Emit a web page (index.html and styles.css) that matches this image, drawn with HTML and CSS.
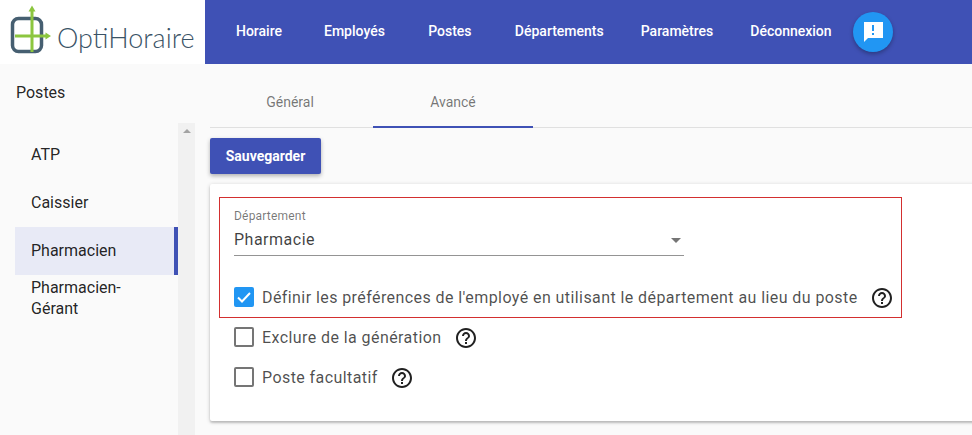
FILE: index.html
```html
<!DOCTYPE html>
<html lang="fr">
<head>
<meta charset="utf-8">
<title>OptiHoraire</title>
<link rel="stylesheet" href="styles.css">
</head>
<body>
<header class="topbar">
  <div class="brand">
    <svg class="brand-mark" width="56" height="64" viewBox="0 0 56 64" aria-hidden="true">
      <rect x="12.500" y="18.500" width="29" height="33" rx="6" fill="none" stroke="#465f71" stroke-width="3.500"/>
      <path d="M32 52V9M15 36h33" fill="none" stroke="#8cc63f" stroke-width="3"/>
      <path d="M32 5.500l-3.500 6h7zM51 36l-5.500-3.500v7z" fill="#8cc63f"/>
    </svg>
    <span class="brand-name">OptiHoraire</span>
  </div>
  <nav class="nav">
    <a class="nav-item">Horaire</a>
    <a class="nav-item">Employés</a>
    <a class="nav-item">Postes</a>
    <a class="nav-item">Départements</a>
    <a class="nav-item">Paramètres</a>
    <a class="nav-item">Déconnexion</a>
    <button class="fab" aria-label="Commentaires">
      <svg width="24" height="24" viewBox="0 0 24 24"><path fill="#fff" d="M22 2H3v20l4-4h15V2zm-9 9h-2V5h2v6zm0 4h-2v-2h2v2z"/></svg>
    </button>
  </nav>
</header>
<div class="layout">
  <aside class="sidebar">
    <h2 class="side-title">Postes</h2>
    <div class="side-scroll">
      <ul class="side-list">
        <li class="side-item">ATP</li>
        <li class="side-item">Caissier</li>
        <li class="side-item is-active">Pharmacien</li>
        <li class="side-item">Pharmacien-Gérant</li>
      </ul>
      <div class="scrollbar"><span class="scroll-arrow"></span></div>
    </div>
  </aside>
  <main class="main">
    <div class="tabs">
      <div class="tab">Général</div>
      <div class="tab is-current">Avancé</div>
    </div>
    <button class="save">Sauvegarder</button>
    <section class="card">
      <div class="highlight">
        <div class="select">
          <div class="select-label">Département</div>
          <div class="select-value"><span>Pharmacie</span><i class="caret"></i></div>
        </div>
        <div class="check-row">
          <span class="box is-checked">
            <svg width="20" height="20" viewBox="0 0 20 20"><path d="M4 10.500l4 4 8-8.500" fill="none" stroke="#fff" stroke-width="2"/></svg>
          </span>
          <span class="check-text">Définir les préférences de l'employé en utilisant le département au lieu du poste</span>
          <svg class="help" width="24" height="24" viewBox="0 0 24 24"><path d="M11 18h2v-2h-2v2zm1-16C6.480 2 2 6.480 2 12s4.480 10 10 10 10-4.480 10-10S17.520 2 12 2zm0 18c-4.410 0-8-3.590-8-8s3.590-8 8-8 8 3.590 8 8-3.590 8-8 8zm0-14c-2.210 0-4 1.790-4 4h2c0-1.100.9-2 2-2s2 .9 2 2c0 2-3 1.750-3 5h2c0-2.250 3-2.500 3-5 0-2.210-1.790-4-4-4z"/></svg>
        </div>
      </div>
      <div class="check-row plain">
        <span class="box"></span>
        <span class="check-text">Exclure de la génération</span>
        <svg class="help" width="24" height="24" viewBox="0 0 24 24"><path d="M11 18h2v-2h-2v2zm1-16C6.480 2 2 6.480 2 12s4.480 10 10 10 10-4.480 10-10S17.520 2 12 2zm0 18c-4.410 0-8-3.590-8-8s3.590-8 8-8 8 3.590 8 8-3.590 8-8 8zm0-14c-2.210 0-4 1.790-4 4h2c0-1.100.9-2 2-2s2 .9 2 2c0 2-3 1.750-3 5h2c0-2.250 3-2.500 3-5 0-2.210-1.790-4-4-4z"/></svg>
      </div>
      <div class="check-row plain">
        <span class="box"></span>
        <span class="check-text">Poste facultatif</span>
        <svg class="help" width="24" height="24" viewBox="0 0 24 24"><path d="M11 18h2v-2h-2v2zm1-16C6.480 2 2 6.480 2 12s4.480 10 10 10 10-4.480 10-10S17.520 2 12 2zm0 18c-4.410 0-8-3.590-8-8s3.590-8 8-8 8 3.590 8 8-3.590 8-8 8zm0-14c-2.210 0-4 1.790-4 4h2c0-1.100.9-2 2-2s2 .9 2 2c0 2-3 1.750-3 5h2c0-2.250 3-2.500 3-5 0-2.210-1.790-4-4-4z"/></svg>
      </div>
    </section>
  </main>
</div>
</body>
</html>
```

FILE: styles.css
```css
* { box-sizing: border-box; }
html, body { margin: 0; height: 100%; overflow: hidden; }
body {
  background: #fafafa;
  color: rgba(0, 0, 0, .87);
  font-family: Roboto, sans-serif;
  font-size: 14px;
  display: flex;
  flex-direction: column;
}
.topbar { display: flex; height: 64px; background: #3f51b5; flex: none; }
.brand {
  width: 205px;
  background: #fff;
  display: flex;
  align-items: center;
  flex: none;
}
.brand-mark { flex: none; }
.brand-name {
  margin: 10px 0 0 1px;
  font-family: Lato, sans-serif;
  font-weight: 300;
  font-size: 27px;
  color: #3a5366;
}
.nav { display: flex; align-items: center; gap: 5px; padding-left: 10px; }
.nav-item {
  min-width: 88px;
  padding: 0 16px;
  text-align: center;
  color: #fff;
  font-weight: 500;
  font-size: 14px;
  margin-top: -2px;
}
.fab {
  width: 40px;
  height: 40px;
  border: 0;
  border-radius: 50%;
  background: #2196f3;
  display: flex;
  align-items: center;
  justify-content: center;
  padding: 0;
  box-shadow: 0 2px 4px rgba(0, 0, 0, .3);
}
.layout { display: flex; flex: 1; min-height: 0; }
.sidebar { width: 195px; flex: none; display: flex; flex-direction: column; }
.side-title {
  margin: 0;
  padding: 19px 0 0 16px;
  height: 59px;
  font-size: 16px;
  line-height: 20px;
  font-weight: 400;
}
.side-scroll { flex: 1; display: flex; min-height: 0; }
.side-list { list-style: none; margin: 0; padding: 8px 0 0 15px; width: 178px; }
.side-item {
  height: 48px;
  padding: 0 20px 2px 16px;
  display: flex;
  align-items: center;
  font-size: 16px;
  line-height: 21px;
}
.side-item.is-active { background: #e8eaf6; border-right: 4px solid #3f51b5; }
.scrollbar { width: 17px; background: #f1f1f1; display: flex; justify-content: center; padding-top: 6px; }
.scroll-arrow {
  width: 0;
  height: 0;
  border: 4px solid transparent;
  border-top: 0;
  border-bottom: 4px solid #a3a3a3;
}
.main { flex: 1; min-width: 0; padding: 12px 0 0 15px; overflow: hidden; }
.tabs { display: flex; gap: 3px; height: 52px; border-bottom: 1px solid #e0e0e0; }
.tab {
  width: 160px;
  height: 52px;
  line-height: 52px;
  text-align: center;
  font-size: 14px;
  font-weight: 400;
  color: rgba(0, 0, 0, .54);
}
.tab.is-current { border-bottom: 2px solid #3f51b5; }
.save {
  display: block;
  margin: 10px 0 10px;
  width: 111px;
  height: 36px;
  border: 0;
  border-radius: 2px;
  background: #3f51b5;
  color: #fff;
  font-family: Roboto, sans-serif;
  font-size: 14px;
  font-weight: 700;
  padding: 0;
  box-shadow: 0 2px 4px rgba(0, 0, 0, .3);
}
.card {
  width: 800px;
  height: 237px;
  background: #fff;
  border-radius: 2px;
  padding: 13px 0 0 9px;
  box-shadow: 0 2px 2px rgba(0, 0, 0, .14), 0 1px 4px rgba(0, 0, 0, .2);
}
.highlight {
  width: 683px;
  height: 121px;
  border: 1px solid #d32f2f;
  padding: 11px 0 0 14px;
}
.select { width: 450px; height: 47px; border-bottom: 1px solid #949494; margin-bottom: 29px; }
.select-label { font-size: 12px; line-height: 14px; color: rgba(0, 0, 0, .54); letter-spacing: .2px; }
.select-value {
  display: flex;
  justify-content: space-between;
  align-items: center;
  font-size: 16px;
  line-height: 22px;
  margin-top: 6px;
  padding-right: 3px;
  letter-spacing: .5px;
  color: rgba(0, 0, 0, .75);
}
.caret {
  width: 0;
  height: 0;
  border: 5px solid transparent;
  border-bottom: 0;
  border-top: 5px solid #757575;
}
.check-row { display: flex; align-items: center; height: 24px; }
.check-row.plain { margin-left: 15px; }
.highlight + .check-row.plain { margin-top: 7px; }
.check-row.plain + .check-row.plain { margin-top: 16px; }
.box {
  width: 20px;
  height: 20px;
  border: 2px solid #757575;
  border-radius: 2px;
  flex: none;
  margin-right: 8px;
  display: flex;
  align-items: center;
  justify-content: center;
}
.box.is-checked { background: #2196f3; border: 0; }
.check-text { font-size: 16px; letter-spacing: .42px; color: rgba(0, 0, 0, .7); white-space: nowrap; }
.help { margin: 2px 0 0 12px; flex: none; fill: #212121; }
```
